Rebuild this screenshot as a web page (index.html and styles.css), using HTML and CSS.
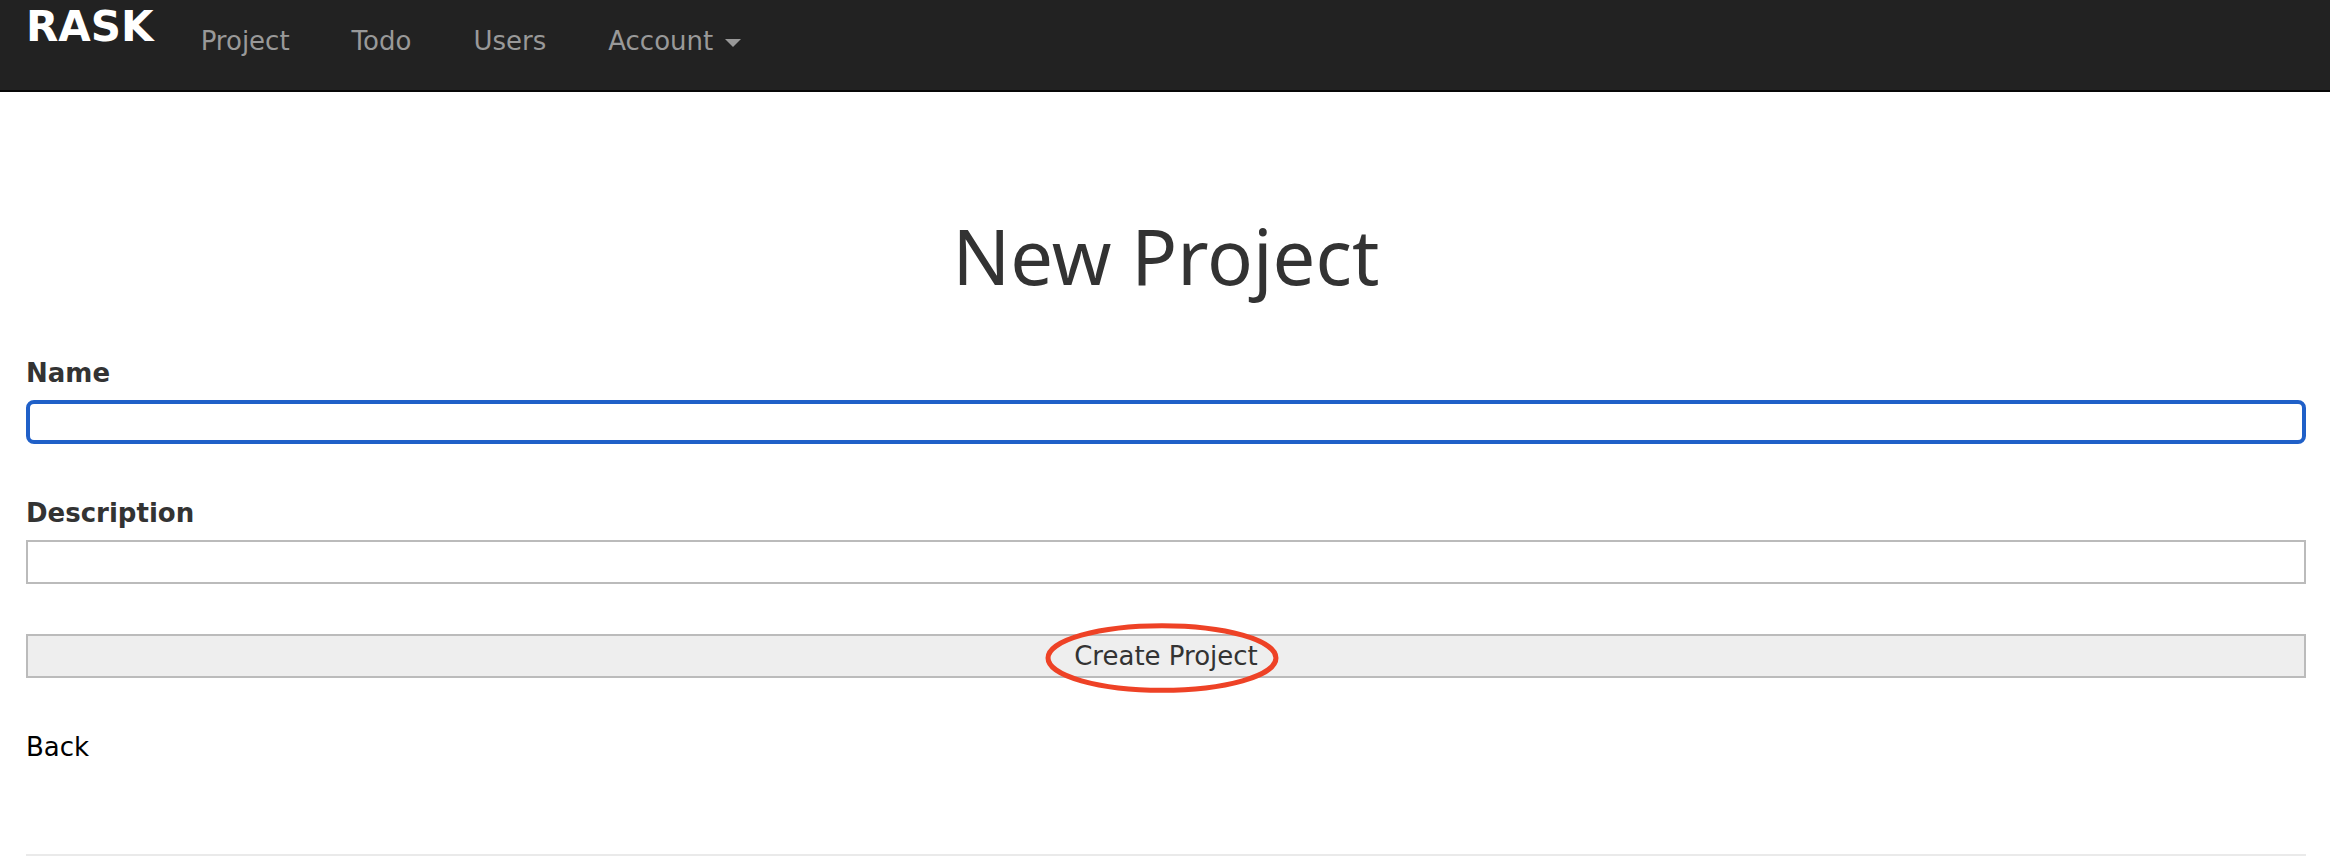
FILE: index.html
```html
<!DOCTYPE html>
<html lang="en">
<head>
  <meta charset="utf-8">
  <title>New Project</title>
  <link rel="stylesheet" href="styles.css">
</head>
<body>
  <header class="navbar">
    <a class="logo" href="#">RASK</a>
    <nav class="nav">
      <a class="nav-link" href="#">Project</a>
      <a class="nav-link" href="#">Todo</a>
      <a class="nav-link" href="#">Users</a>
      <a class="nav-link" href="#">Account <span class="caret"></span></a>
    </nav>
  </header>
  <main class="container">
    <h1 class="title">New Project</h1>
    <form class="form">
      <div class="field">
        <label class="label" for="name">Name</label>
        <input class="input input-active" id="name" type="text">
      </div>
      <div class="field">
        <label class="label" for="description">Description</label>
        <input class="input" id="description" type="text">
      </div>
      <button class="submit" type="button">
        Create Project
        <svg class="marker" viewBox="0 0 232 70" aria-hidden="true">
          <ellipse cx="116" cy="35" rx="113" ry="32" fill="none" stroke="#ee4226" stroke-width="5"/>
        </svg>
      </button>
    </form>
    <a class="back" href="#">Back</a>
    <hr class="rule">
  </main>
</body>
</html>
```
FILE: styles.css
```css
* {
  box-sizing: border-box;
}

body {
  margin: 0;
  background: #fff;
  color: #333;
  font: 26px/38px Verdana, "DejaVu Sans", sans-serif;
}

a {
  text-decoration: none;
}

.navbar {
  display: flex;
  align-items: flex-start;
  gap: 16px;
  height: 92px;
  padding: 0 26px;
  background: #222;
  border-bottom: 2px solid #080808;
}

.logo {
  color: #fff;
  font-size: 42px;
  font-weight: bold;
  line-height: 54px;
}

.nav {
  display: flex;
  padding-top: 22px;
}

.nav-link {
  padding: 0 31px;
  color: #999;
}

.caret {
  display: inline-block;
  margin-left: 4px;
  vertical-align: middle;
  border-top: 8px solid #999;
  border-right: 8px solid transparent;
  border-left: 8px solid transparent;
}

.container {
  padding: 120px 24px 12px 26px;
}

.title {
  margin: 0 0 54px;
  font: 76px/88px "Noto Sans", sans-serif;
  text-align: center;
}

.form {
  display: flex;
  flex-direction: column;
  gap: 50px;
  margin-bottom: 50px;
}

.field {
  display: flex;
  flex-direction: column;
  gap: 8px;
}

.label {
  font-weight: bold;
}

.input,
.submit {
  width: 100%;
  height: 44px;
  border: 2px solid #bbb;
  border-radius: 0;
  color: #333;
  font: inherit;
}

.input {
  padding: 0 8px;
  background: #fff;
  outline: none;
}

.input-active,
.input:focus {
  border: 4px solid #2060c8;
  border-radius: 8px;
}

.submit {
  position: relative;
  padding: 0;
  background: #eee;
}

.marker {
  position: absolute;
  top: 50%;
  left: 50%;
  width: 234px;
  height: 72px;
  margin: -34px 0 0 -121px;
}

.back {
  display: block;
  width: max-content;
  color: #000;
}

.rule {
  margin: 88px 0 0;
  border: 0;
  border-top: 2px solid #eaeaea;
}
```
